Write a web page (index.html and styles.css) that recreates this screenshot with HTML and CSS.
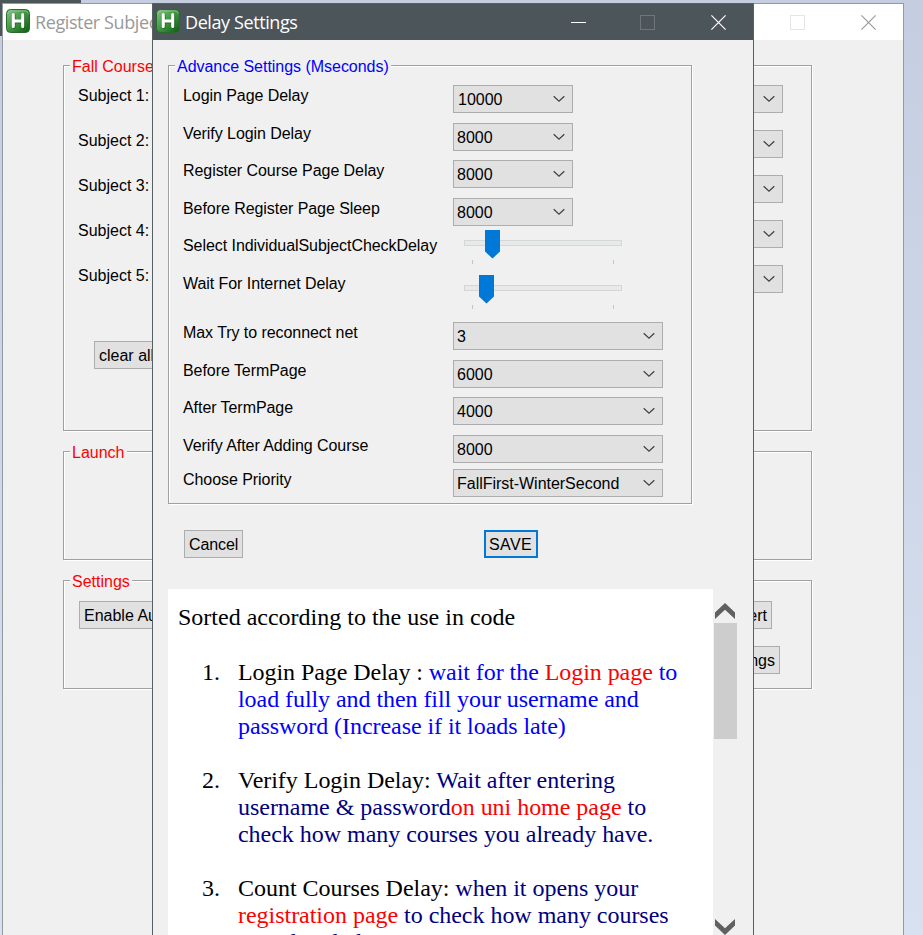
FILE: index.html
```html
<!DOCTYPE html>
<html lang="en">
<head>
<meta charset="utf-8">
<title>Delay Settings</title>
<link rel="stylesheet" href="styles.css">
</head>
<body>
<svg class="defs" width="0" height="0" aria-hidden="true">
  <defs>
    <linearGradient id="green" x1="0" y1="0" x2="1" y2="1">
      <stop offset="0" stop-color="#86c486"/><stop offset=".45" stop-color="#469a48"/><stop offset="1" stop-color="#0c5c10"/>
    </linearGradient>
    <symbol id="app" viewBox="0 0 24 24">
      <rect x=".5" y=".5" width="23" height="23" rx="4" fill="url(#green)" stroke="#2a6a2c"/>
      <path d="M2 4.500Q2 2 4.500 2H19.500Q22 2 22 4.500" fill="none" stroke="#a5d3a2" stroke-opacity=".6"/>
      <path d="M7.300 5.500V17.500M16.700 5.500V17.500M7.300 12H16.700" fill="none" stroke="#124d16" stroke-opacity=".5" stroke-width="3.400" stroke-linecap="round" transform="translate(.8 .8)"/>
      <path d="M7.300 5.500V17.500M16.700 5.500V17.500M7.300 12H16.700" fill="none" stroke="#fff" stroke-width="3" stroke-linecap="round"/>
    </symbol>
    <symbol id="chev" viewBox="0 0 12 8"><path d="M.7 1.200L6 6.200L11.300 1.200" fill="none" stroke="#404040" stroke-width="1.200"/></symbol>
    <symbol id="close" viewBox="0 0 15 15"><path d="M.4.400L14.600 14.600M14.600.4L.4 14.600" fill="none" stroke="currentColor" stroke-width="1.150"/></symbol>
    <symbol id="max" viewBox="0 0 15 15"><rect x=".5" y=".5" width="14" height="14" fill="none" stroke="currentColor"/></symbol>
    <symbol id="arrow" viewBox="0 0 20 16"><path d="M0 9.500L10 0L20 9.500V16L10 6.800L0 16Z" fill="#606060"/></symbol>
  </defs>
</svg>
<div class="desktop">
  <div class="behind"></div>

  <section class="window main-window">
    <header class="titlebar">
      <svg class="app-icon"><use href="#app"/></svg>
      <span class="title">Register Subjects</span>
      <svg class="cap cap-max"><use href="#max"/></svg>
      <svg class="cap"><use href="#close"/></svg>
    </header>
    <div class="main-body">
      <div class="group fall">
        <div class="legend">Fall Courses</div>
        <div class="subjects">
          <div class="subject"><span>Subject 1:</span><div class="combo"><svg><use href="#chev"/></svg></div></div>
          <div class="subject"><span>Subject 2:</span><div class="combo"><svg><use href="#chev"/></svg></div></div>
          <div class="subject"><span>Subject 3:</span><div class="combo"><svg><use href="#chev"/></svg></div></div>
          <div class="subject"><span>Subject 4:</span><div class="combo"><svg><use href="#chev"/></svg></div></div>
          <div class="subject"><span>Subject 5:</span><div class="combo"><svg><use href="#chev"/></svg></div></div>
        </div>
        <div class="btn clear">clear all</div>
      </div>
      <div class="group launch"><div class="legend">Launch</div></div>
      <div class="group settings">
        <div class="legend">Settings</div>
        <div class="set-row"><div class="btn">Enable Auto</div><div class="btn">Alert</div></div>
        <div class="set-row second"><div class="btn">Settings</div></div>
      </div>
    </div>
  </section>

  <section class="window dialog">
    <header class="titlebar">
      <svg class="app-icon"><use href="#app"/></svg>
      <span class="title">Delay Settings</span>
      <span class="minimize"></span>
      <svg class="cap cap-max"><use href="#max"/></svg>
      <svg class="cap"><use href="#close"/></svg>
    </header>
    <div class="dialog-body">
      <div class="group advance">
        <div class="legend">Advance Settings (Mseconds)</div>
        <div class="fields">
          <label>Login Page Delay</label><div class="combo narrow">10000<svg><use href="#chev"/></svg></div>
          <label>Verify Login Delay</label><div class="combo narrow">8000<svg><use href="#chev"/></svg></div>
          <label>Register Course Page Delay</label><div class="combo narrow">8000<svg><use href="#chev"/></svg></div>
          <label>Before Register Page Sleep</label><div class="combo narrow">8000<svg><use href="#chev"/></svg></div>
          <label>Select IndividualSubjectCheckDelay</label>
          <svg class="slider first" viewBox="0 0 158 34"><rect x=".5" y="10.500" width="157" height="5" fill="#e7eaea" stroke="#d6d6d6"/><path d="M8.500 30V34M149.500 30V34" stroke="#c4c4c4"/><path d="M21 0H36V21.500L28.500 28.500L21 21.500Z" fill="#0078d7"/></svg>
          <label>Wait For Internet Delay</label>
          <svg class="slider last" viewBox="0 0 158 34"><rect x=".5" y="10.500" width="157" height="5" fill="#e7eaea" stroke="#d6d6d6"/><path d="M8.500 30V34M149.500 30V34" stroke="#c4c4c4"/><path d="M15 0H30V21.500L22.500 28.500L15 21.500Z" fill="#0078d7"/></svg>
          <label>Max Try to reconnect net</label><div class="combo">3<svg><use href="#chev"/></svg></div>
          <label>Before TermPage</label><div class="combo">6000<svg><use href="#chev"/></svg></div>
          <label>After TermPage</label><div class="combo">4000<svg><use href="#chev"/></svg></div>
          <label>Verify After Adding Course</label><div class="combo">8000<svg><use href="#chev"/></svg></div>
          <label>Choose Priority</label><div class="combo">FallFirst-WinterSecond<svg><use href="#chev"/></svg></div>
        </div>
      </div>
      <div class="actions"><div class="btn cancel">Cancel</div><div class="btn save">SAVE</div></div>
      <div class="help">
        <div class="page">
          <p>Sorted according to the use in code</p>
          <div class="item"><span>1.</span><div>Login Page Delay : <span class="blue">wait for the <span class="red">Login page</span> to<br>load fully and then fill your username and<br>password (Increase if it loads late)</span></div></div>
          <div class="item"><span>2.</span><div>Verify Login Delay: <span class="navy">Wait after entering<br>username &amp; password<span class="red">on uni home page</span> to<br>check how many courses you already have.</span></div></div>
          <div class="item"><span>3.</span><div>Count Courses Delay: <span class="navy">when it opens your<br><span class="red">registration page</span> to check how many courses<br>you already have.</span></div></div>
        </div>
        <div class="scrollbar">
          <svg class="up"><use href="#arrow"/></svg>
          <div class="thumb"></div>
          <svg class="down"><use href="#arrow"/></svg>
        </div>
      </div>
    </div>
  </section>
</div>
</body>
</html>
```
FILE: styles.css
```css
* { box-sizing: border-box; }
body { margin: 0; font: 16px/18px "Liberation Sans", Arial, sans-serif; color: #000; }
svg { display: block; flex: none; }
.defs { position: absolute; }
.desktop { position: relative; width: 923px; height: 935px; overflow: hidden; background: linear-gradient(#c5cee0, #d7e1ef); }
.behind { position: absolute; left: 0; top: 0; width: 81px; height: 36px; background: #4c555a; }
.window { position: absolute; top: 3px; height: 960px; background: #f0f0f0; white-space: nowrap; }
.main-window { left: 2px; width: 902px; border: 1px solid #949ba0; }
.dialog { left: 152px; width: 602px; border: 1px solid #566165; }

.titlebar { display: flex; align-items: center; height: 36px; padding: 0 27px 0 3px; background: #fff; color: #999; }
.dialog .titlebar { background: #4c555a; color: #fff; }
.app-icon { width: 24px; height: 24px; margin: -2px 5px 0 0; }
.title { flex: 1; font: 18px/24px "Open Sans", "Noto Sans", sans-serif; letter-spacing: -0.4px; padding-bottom: 1px; }
.minimize { width: 15px; height: 1px; background: #fff; margin-right: 54px; }
.cap { width: 15px; height: 15px; }
.cap-max { margin-right: 56px; color: #e6e6e6; }
.dialog .cap-max { color: #6e7679; }

.group { border: 1px solid #a0a0a0; box-shadow: 1px 1px 0 #fff, inset 1px 1px 0 #fff; }
.legend { width: max-content; height: 18px; margin: -8px 0 0 6px; padding: 0 2px; background: #f0f0f0; color: #f00; }
.btn { width: max-content; height: 28px; padding: 0 4px; border: 1px solid #adadad; background: #e1e1e1; line-height: 27px; }
.combo { display: flex; align-items: center; justify-content: space-between; height: 28px; padding: 1px 7px 0 3px; border: 1px solid #adadad; background: #e1e1e1; line-height: 19px; letter-spacing: -0.02px; }
.combo svg { width: 12px; height: 8px; margin: -1px 0 0 auto; }

.main-body { padding: 25px 91px 0 60px; }
.fall { height: 366px; }
.launch { height: 109px; margin-top: 20px; }
.settings { height: 109px; margin-top: 20px; }
.subjects { display: grid; grid-auto-rows: 45px; margin-top: 9px; padding: 0 28px 0 14px; }
.subject { display: flex; justify-content: space-between; padding-top: 1px; }
.subject span { padding-top: 1px; }
.subject .combo { width: 300px; margin-top: -1px; }
.clear { margin: 31px 0 0 30px; }
.set-row { display: flex; justify-content: space-between; margin-top: 10px; padding: 0 39px 0 15px; }
.set-row.second { justify-content: flex-end; margin-top: 17px; padding-right: 31px; }

.dialog-body { display: flex; flex-direction: column; height: 922px; padding: 25px 15px 0; }
.advance { width: 524px; height: 439px; }
.advance .legend { color: #00f; letter-spacing: -0.03px; }
.fields { display: grid; grid-template-columns: 270px 210px; grid-template-rows: 38px 37px 38px 37px 38px 49px 38px 37px 38px 34px 30px; align-items: start; margin: 9px 0 0 14px; }
.fields label { padding-top: 2px; letter-spacing: -0.06px; }
.narrow { width: 120px; }
.narrow:first-of-type { padding-left: 4px; }
.slider { width: 158px; height: 34px; margin: -5px 0 0 11px; }
.slider.last { margin-top: 2px; }
.actions { display: flex; margin: 26px 0 31px 16px; }
.cancel { width: 59px; letter-spacing: -0.1px; }
.save { width: 54px; margin-left: 241px; border: 2px solid #0078d7; padding: 0 3px; line-height: 25px; letter-spacing: 0.4px; }
.help { display: flex; flex: 1; min-height: 0; }
.page { width: 545px; padding: 15px 0 0 10px; background: #fff; font: 24px/27px "Liberation Serif", "Times New Roman", serif; overflow: hidden; }
.page p { margin: 0 0 28px; }
.item { display: grid; grid-template-columns: 36px 1fr; margin: 0 0 27px 24px; letter-spacing: -0.03px; }
.item:nth-of-type(1) { letter-spacing: -0.06px; }
.blue { color: #00f; }
.navy { color: #000080; }
.red { color: #f00; }
.scrollbar { width: 23px; margin-left: 1px; padding-top: 14px; }
.scrollbar svg { width: 20px; height: 16px; margin-left: 1px; }
.thumb { height: 116px; margin: 4px 0 180px; background: #cdcdcd; }
.down { transform: scaleY(-1); }
```
